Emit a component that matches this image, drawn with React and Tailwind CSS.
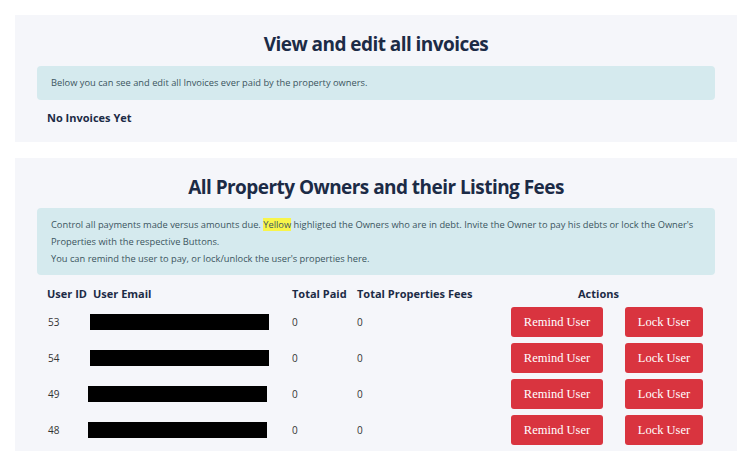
import React from 'react'

const owners = [
  { id: 53, paid: 0, fees: 0, barOffset: 'ml-[-3px]' },
  { id: 54, paid: 0, fees: 0, barOffset: 'ml-[-3px]' },
  { id: 49, paid: 0, fees: 0, barOffset: 'ml-[-5px]' },
  { id: 48, paid: 0, fees: 0, barOffset: 'ml-[-5px]' },
]

const sans = { fontFamily: '"Open Sans", "Liberation Sans", sans-serif' }

function Card({ title, children, className = '' }) {
  return (
    <section className={`bg-[#f5f6fa] pt-[17px] ${className}`}>
      <h2 className="text-center text-[19px] leading-[24px] font-bold text-[#1c2b46] tracking-[-0.55px]">
        {title}
      </h2>
      {children}
    </section>
  )
}

export default function App() {
  return (
    <div className="min-h-[451px] bg-white px-[15px] pt-[15px] flex flex-col gap-[16px]" style={sans}>
      {/* Invoices */}
      <Card title="View and edit all invoices" className="pb-[16px]">
        <div className="mx-[22px] mt-[10px] rounded bg-[#d5eaee] h-[34px] flex items-center px-[14px] text-[9.3px] text-[#3b5560]">
          Below you can see and edit all Invoices ever paid by the property owners.
        </div>
        <p className="ml-[32px] mt-[10px] text-[11px] leading-[16px] font-bold text-[#1c2b46]">No Invoices Yet</p>
      </Card>

      {/* Owners + fees */}
      <Card title="All Property Owners and their Listing Fees" className="flex-1">
        <div className="mx-[22px] mt-[9px] rounded bg-[#d5eaee] py-[8px] px-[14px] text-[9.3px] leading-[17px] text-[#3b5560]">
          <p>
            Control all payments made versus amounts due. <mark className="bg-[#f8f54a] text-inherit">Yellow</mark> highligted the
            Owners who are in debt. Invite the Owner to pay his debts or lock the Owner's Properties with the respective
            Buttons.
          </p>
          <p>You can remind the user to pay, or lock/unlock the user's properties here.</p>
        </div>

        <div className="ml-[32px] mt-[11px]">
          <div className="flex h-[16px] items-center text-[11px] font-bold text-[#1c2b46]">
            <span className="w-[46px]">User ID</span>
            <span className="w-[199px]">User Email</span>
            <span className="w-[65px]">Total Paid</span>
            <span className="w-[154px]">Total Properties Fees</span>
            <span className="w-[192px] pl-[67px]">Actions</span>
          </div>
          <div className="mt-[2px]">
            {owners.map(o => (
              <div key={o.id} className="flex h-[36px] items-center text-[10px] text-[#333]">
                <span className="w-[46px] pl-[1px]">{o.id}</span>
                <span className="w-[199px]">
                  <span className={`block h-[16px] w-[179px] bg-black ${o.barOffset}`} />
                </span>
                <span className="w-[65px]">{o.paid}</span>
                <span className="w-[154px]">{o.fees}</span>
                <div className="flex gap-[22px]" style={{ fontFamily: '"Liberation Serif", serif' }}>
                  <button className="w-[92px] h-[30px] rounded-[3px] bg-[#d9343f] text-white text-[12.5px]">
                    Remind User
                  </button>
                  <button className="w-[78px] h-[30px] rounded-[3px] bg-[#d9343f] text-white text-[12.5px]">
                    Lock User
                  </button>
                </div>
              </div>
            ))}
          </div>
        </div>
      </Card>
    </div>
  )
}
